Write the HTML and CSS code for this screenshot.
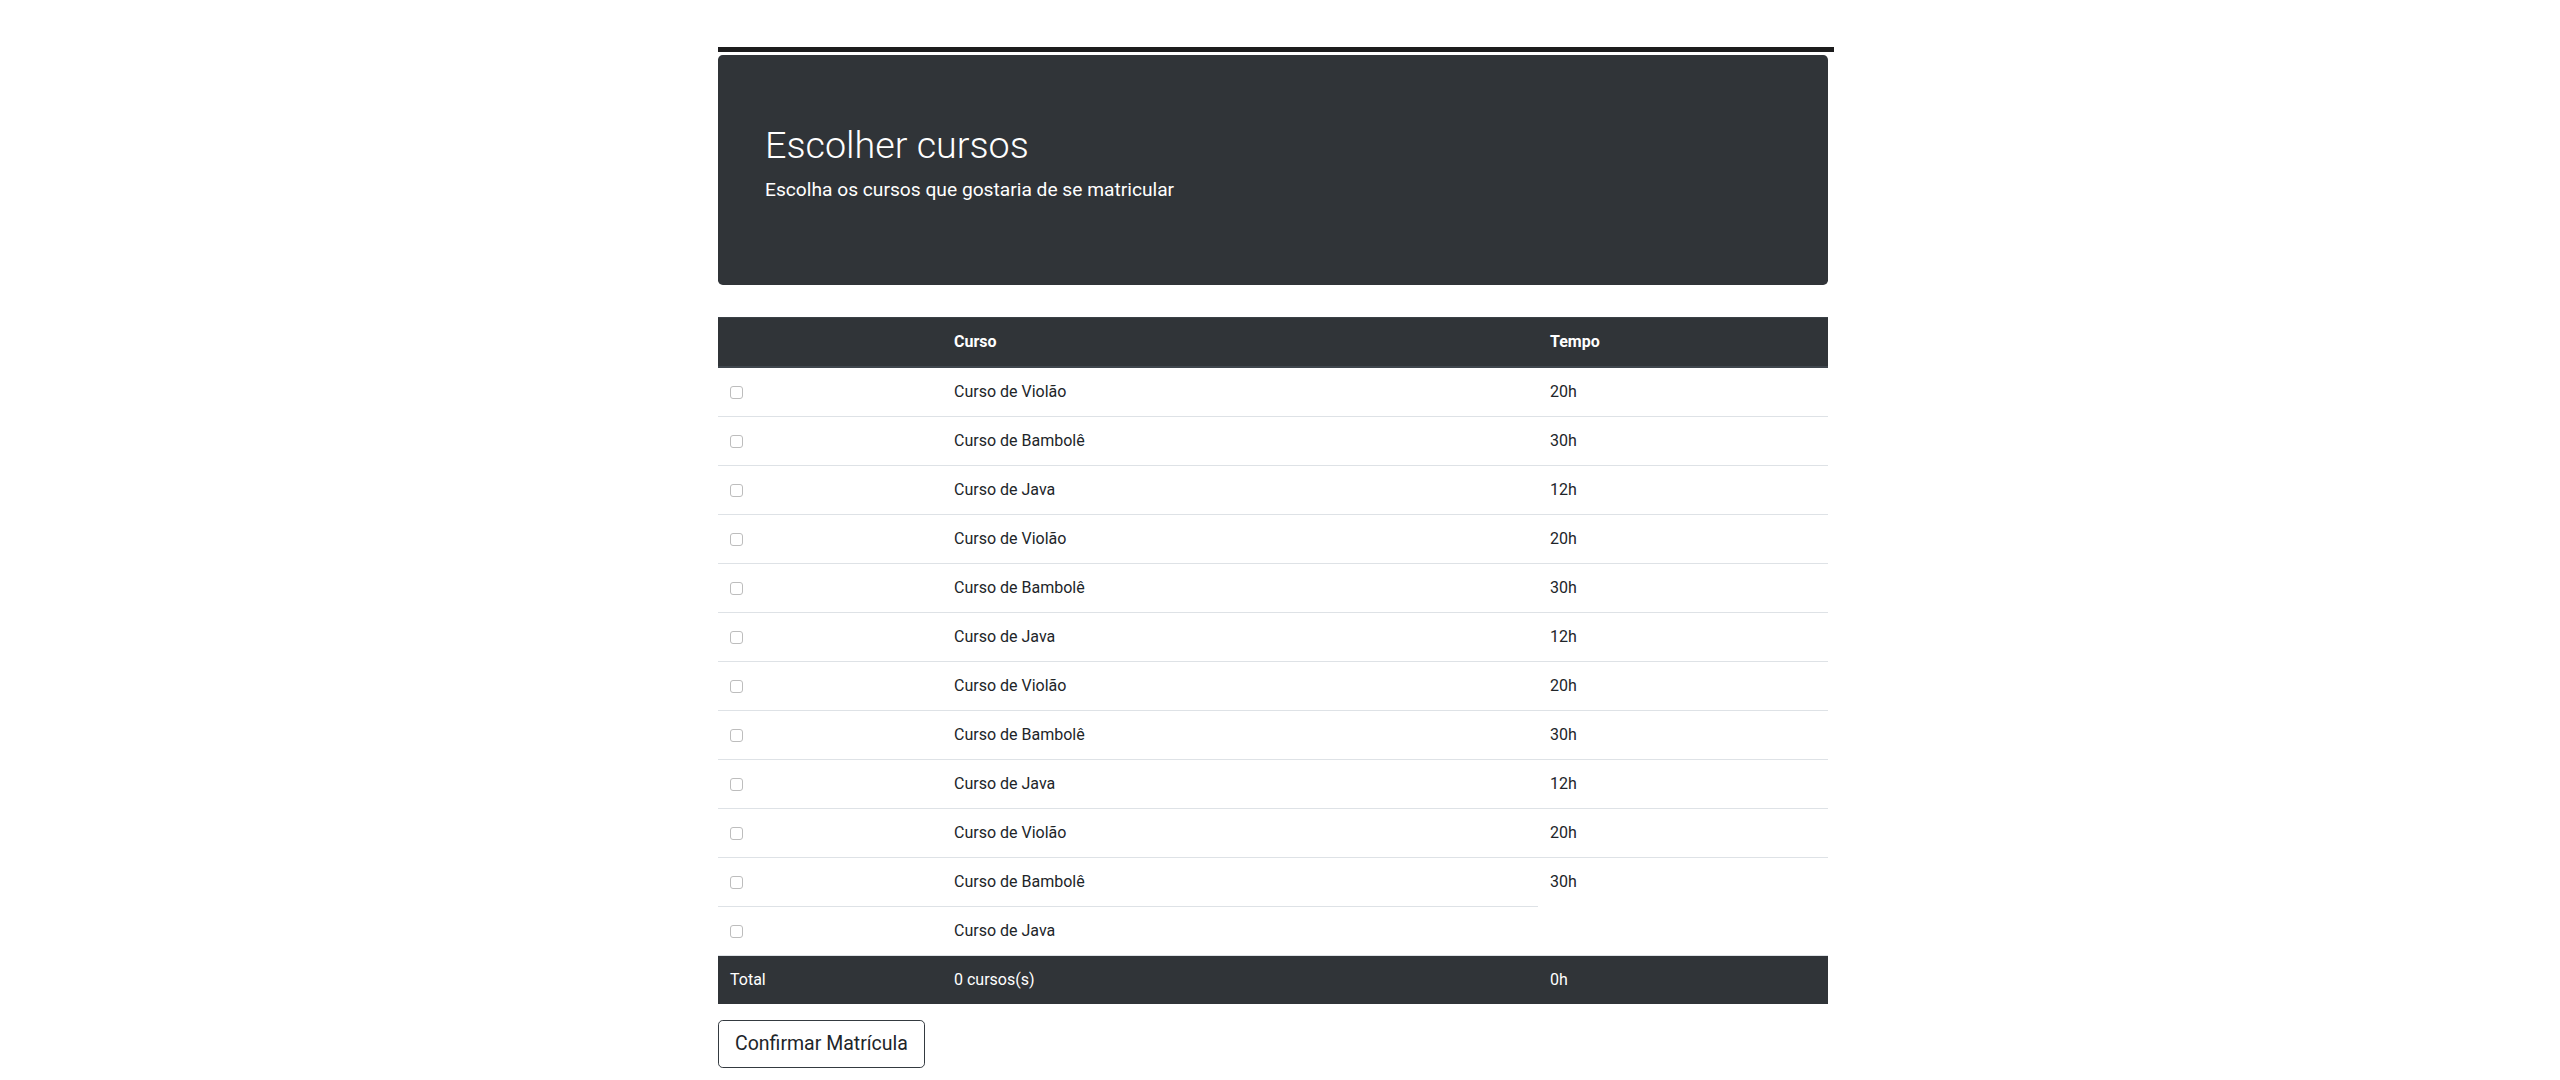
FILE: index.html
```html
<!DOCTYPE html>
<html lang="pt-BR">
<head>
<meta charset="utf-8">
<title>Escolher cursos</title>
<link rel="stylesheet" href="styles.css">
</head>
<body>
<div class="container">
  <div class="topbar"></div>
  <div class="jumbotron">
    <h1 class="title">Escolher cursos</h1>
    <p class="lead">Escolha os cursos que gostaria de se matricular</p>
  </div>
  <table class="table">
    <colgroup>
      <col class="c1"><col class="c2"><col class="c3">
    </colgroup>
    <thead>
      <tr><th></th><th>Curso</th><th>Tempo</th></tr>
    </thead>
    <tbody>
      <tr><td><input type="checkbox" class="chk"></td><td>Curso de Violão</td><td>20h</td></tr>
      <tr><td><input type="checkbox" class="chk"></td><td>Curso de Bambolê</td><td>30h</td></tr>
      <tr><td><input type="checkbox" class="chk"></td><td>Curso de Java</td><td>12h</td></tr>
      <tr><td><input type="checkbox" class="chk"></td><td>Curso de Violão</td><td>20h</td></tr>
      <tr><td><input type="checkbox" class="chk"></td><td>Curso de Bambolê</td><td>30h</td></tr>
      <tr><td><input type="checkbox" class="chk"></td><td>Curso de Java</td><td>12h</td></tr>
      <tr><td><input type="checkbox" class="chk"></td><td>Curso de Violão</td><td>20h</td></tr>
      <tr><td><input type="checkbox" class="chk"></td><td>Curso de Bambolê</td><td>30h</td></tr>
      <tr><td><input type="checkbox" class="chk"></td><td>Curso de Java</td><td>12h</td></tr>
      <tr><td><input type="checkbox" class="chk"></td><td>Curso de Violão</td><td>20h</td></tr>
      <tr><td><input type="checkbox" class="chk"></td><td>Curso de Bambolê</td><td>30h</td></tr>
      <tr><td><input type="checkbox" class="chk"></td><td>Curso de Java</td></tr>
    </tbody>
    <tfoot>
      <tr><td>Total</td><td>0 cursos(s)</td><td>0h</td></tr>
    </tfoot>
  </table>
  <button class="btn" type="button">Confirmar Matrícula</button>
</div>
</body>
</html>
```

FILE: styles.css
```css
html, body {
  background: #ffffff;
}
body {
  margin: 0;
  padding: 0 14px 0 0;
  font-family: Roboto, "Liberation Sans", Arial, sans-serif;
  color: #212529;
}
.container {
  width: 1110px;
  margin: 0 auto;
  padding-top: 47px;
  padding-bottom: 12px;
}
.topbar {
  width: 1116px;
  height: 5px;
  background: #1c1c1d;
  margin-bottom: 3px;
}
.jumbotron {
  background: #303438;
  border-radius: 4.8px;
  padding: 64px 47px;
  margin-bottom: 32px;
  color: #ffffff;
}
.title {
  margin: 0 0 6px 0;
  padding-top: 2px;
  font-size: 37.7px;
  line-height: 48px;
  font-weight: 300;
}
.lead {
  margin: 0 0 16px 0;
  font-size: 19.2px;
  line-height: 30px;
  font-weight: 400;
}
.table {
  width: 100%;
  border-collapse: collapse;
  table-layout: fixed;
  margin-bottom: 16px;
  font-size: 16px;
}
.c1 { width: 224px; }
.c2 { width: 596px; }
.c3 { width: 290px; }
.table th,
.table td {
  padding: 12px;
  line-height: 24px;
  text-align: left;
  vertical-align: top;
  border-top: 1px solid #dee2e6;
}
.table thead th {
  background: #303438;
  color: #ffffff;
  font-weight: 700;
  border-top: 1px solid #3b4147;
  border-bottom: 2px solid #3f464d;
}
.table tfoot td {
  background: #303438;
  color: #ffffff;
  border-top: 1px solid #dee2e6;
}
.chk {
  -webkit-appearance: none;
  appearance: none;
  width: 13px;
  height: 13px;
  margin: 0;
  border: 1px solid #bdbdbd;
  border-radius: 3px;
  background: #ffffff;
  vertical-align: middle;
}
.btn {
  display: inline-block;
  font-family: Roboto, "Liberation Sans", Arial, sans-serif;
  font-size: 19.5px;
  line-height: 30px;
  padding: 8px 16px;
  border: 1px solid #343a40;
  border-radius: 4.8px;
  background: #ffffff;
  color: #212529;
  cursor: pointer;
}
```
